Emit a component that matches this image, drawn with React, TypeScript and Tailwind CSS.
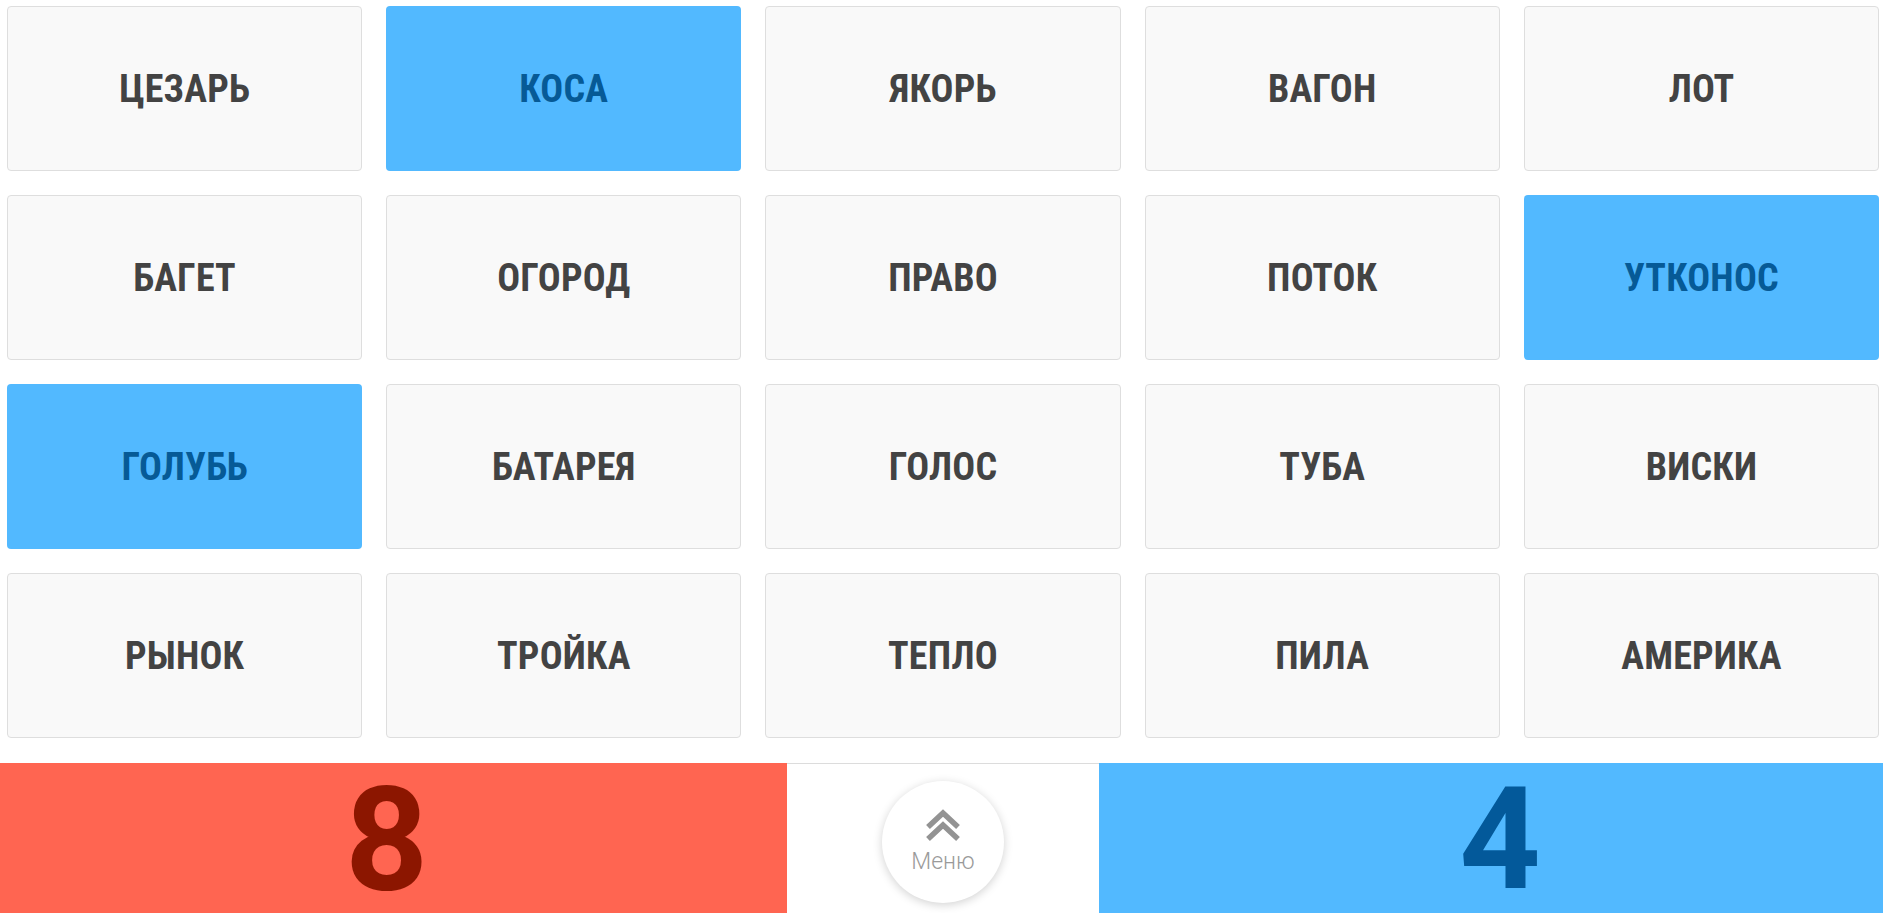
const words = [
  { text: 'ЦЕЗАРЬ', blue: false },
  { text: 'КОСА', blue: true },
  { text: 'ЯКОРЬ', blue: false },
  { text: 'ВАГОН', blue: false },
  { text: 'ЛОТ', blue: false },
  { text: 'БАГЕТ', blue: false },
  { text: 'ОГОРОД', blue: false },
  { text: 'ПРАВО', blue: false },
  { text: 'ПОТОК', blue: false },
  { text: 'УТКОНОС', blue: true },
  { text: 'ГОЛУБЬ', blue: true },
  { text: 'БАТАРЕЯ', blue: false },
  { text: 'ГОЛОС', blue: false },
  { text: 'ТУБА', blue: false },
  { text: 'ВИСКИ', blue: false },
  { text: 'РЫНОК', blue: false },
  { text: 'ТРОЙКА', blue: false },
  { text: 'ТЕПЛО', blue: false },
  { text: 'ПИЛА', blue: false },
  { text: 'АМЕРИКА', blue: false },
];

export default function App() {
  return (
    <div className="h-screen overflow-hidden bg-white flex flex-col font-['Roboto',sans-serif]">
      {/* Word grid */}
      <div className="grid grid-cols-5 gap-[24px] pt-[6px] pl-[7px] pr-[4px]">
        {words.map((w) => (
          <div
            key={w.text}
            className={
              w.blue
                ? 'h-[165px] rounded-[4px] bg-[#52b9ff] flex items-center justify-center pt-[2px]'
                : 'h-[165px] rounded-[4px] bg-[#f9f9f9] border border-[#dedede] flex items-center justify-center pt-[2px]'
            }
          >
            <span
              className={
                w.blue
                  ? 'text-[38px] font-bold font-stretch-condensed text-[#065a96] tracking-[0.2px]'
                  : 'text-[38px] font-bold font-stretch-condensed text-[#434343] tracking-[0.2px]'
              }
            >
              {w.text}
            </span>
          </div>
        ))}
      </div>

      {/* Score bar */}
      <div className="mt-[25px] h-[151px] flex">
        <div className="w-[787px] bg-[#ff6551] flex items-center justify-center">
          <span className="text-[145px] leading-[120px] font-bold text-[#8c1600] ml-[-14px] mt-[4px]">8</span>
        </div>
        <div className="w-[312px] border-t border-[#dcdcdc] flex justify-center pt-[17px]">
          <button className="w-[122px] h-[122px] rounded-full bg-white shadow-[0_2px_10px_rgba(0,0,0,0.18)] flex flex-col items-center justify-center">
            <svg width="36" height="34" viewBox="0 0 36 34" fill="none" stroke="#939393" strokeWidth="5.5" className="mt-[-4px]">
              <polyline points="3,19 18,5 33,19" />
              <polyline points="3,31 18,17 33,31" />
            </svg>
            <span className="text-[23px] font-light text-[#9a9a9a] leading-none mt-[8px]">Меню</span>
          </button>
        </div>
        <div className="flex-1 bg-[#52b9ff] flex items-center justify-center">
          <span className="text-[142px] leading-[120px] font-bold text-[#03599a] ml-[18px] mt-[4px]">4</span>
        </div>
      </div>
    </div>
  );
}
